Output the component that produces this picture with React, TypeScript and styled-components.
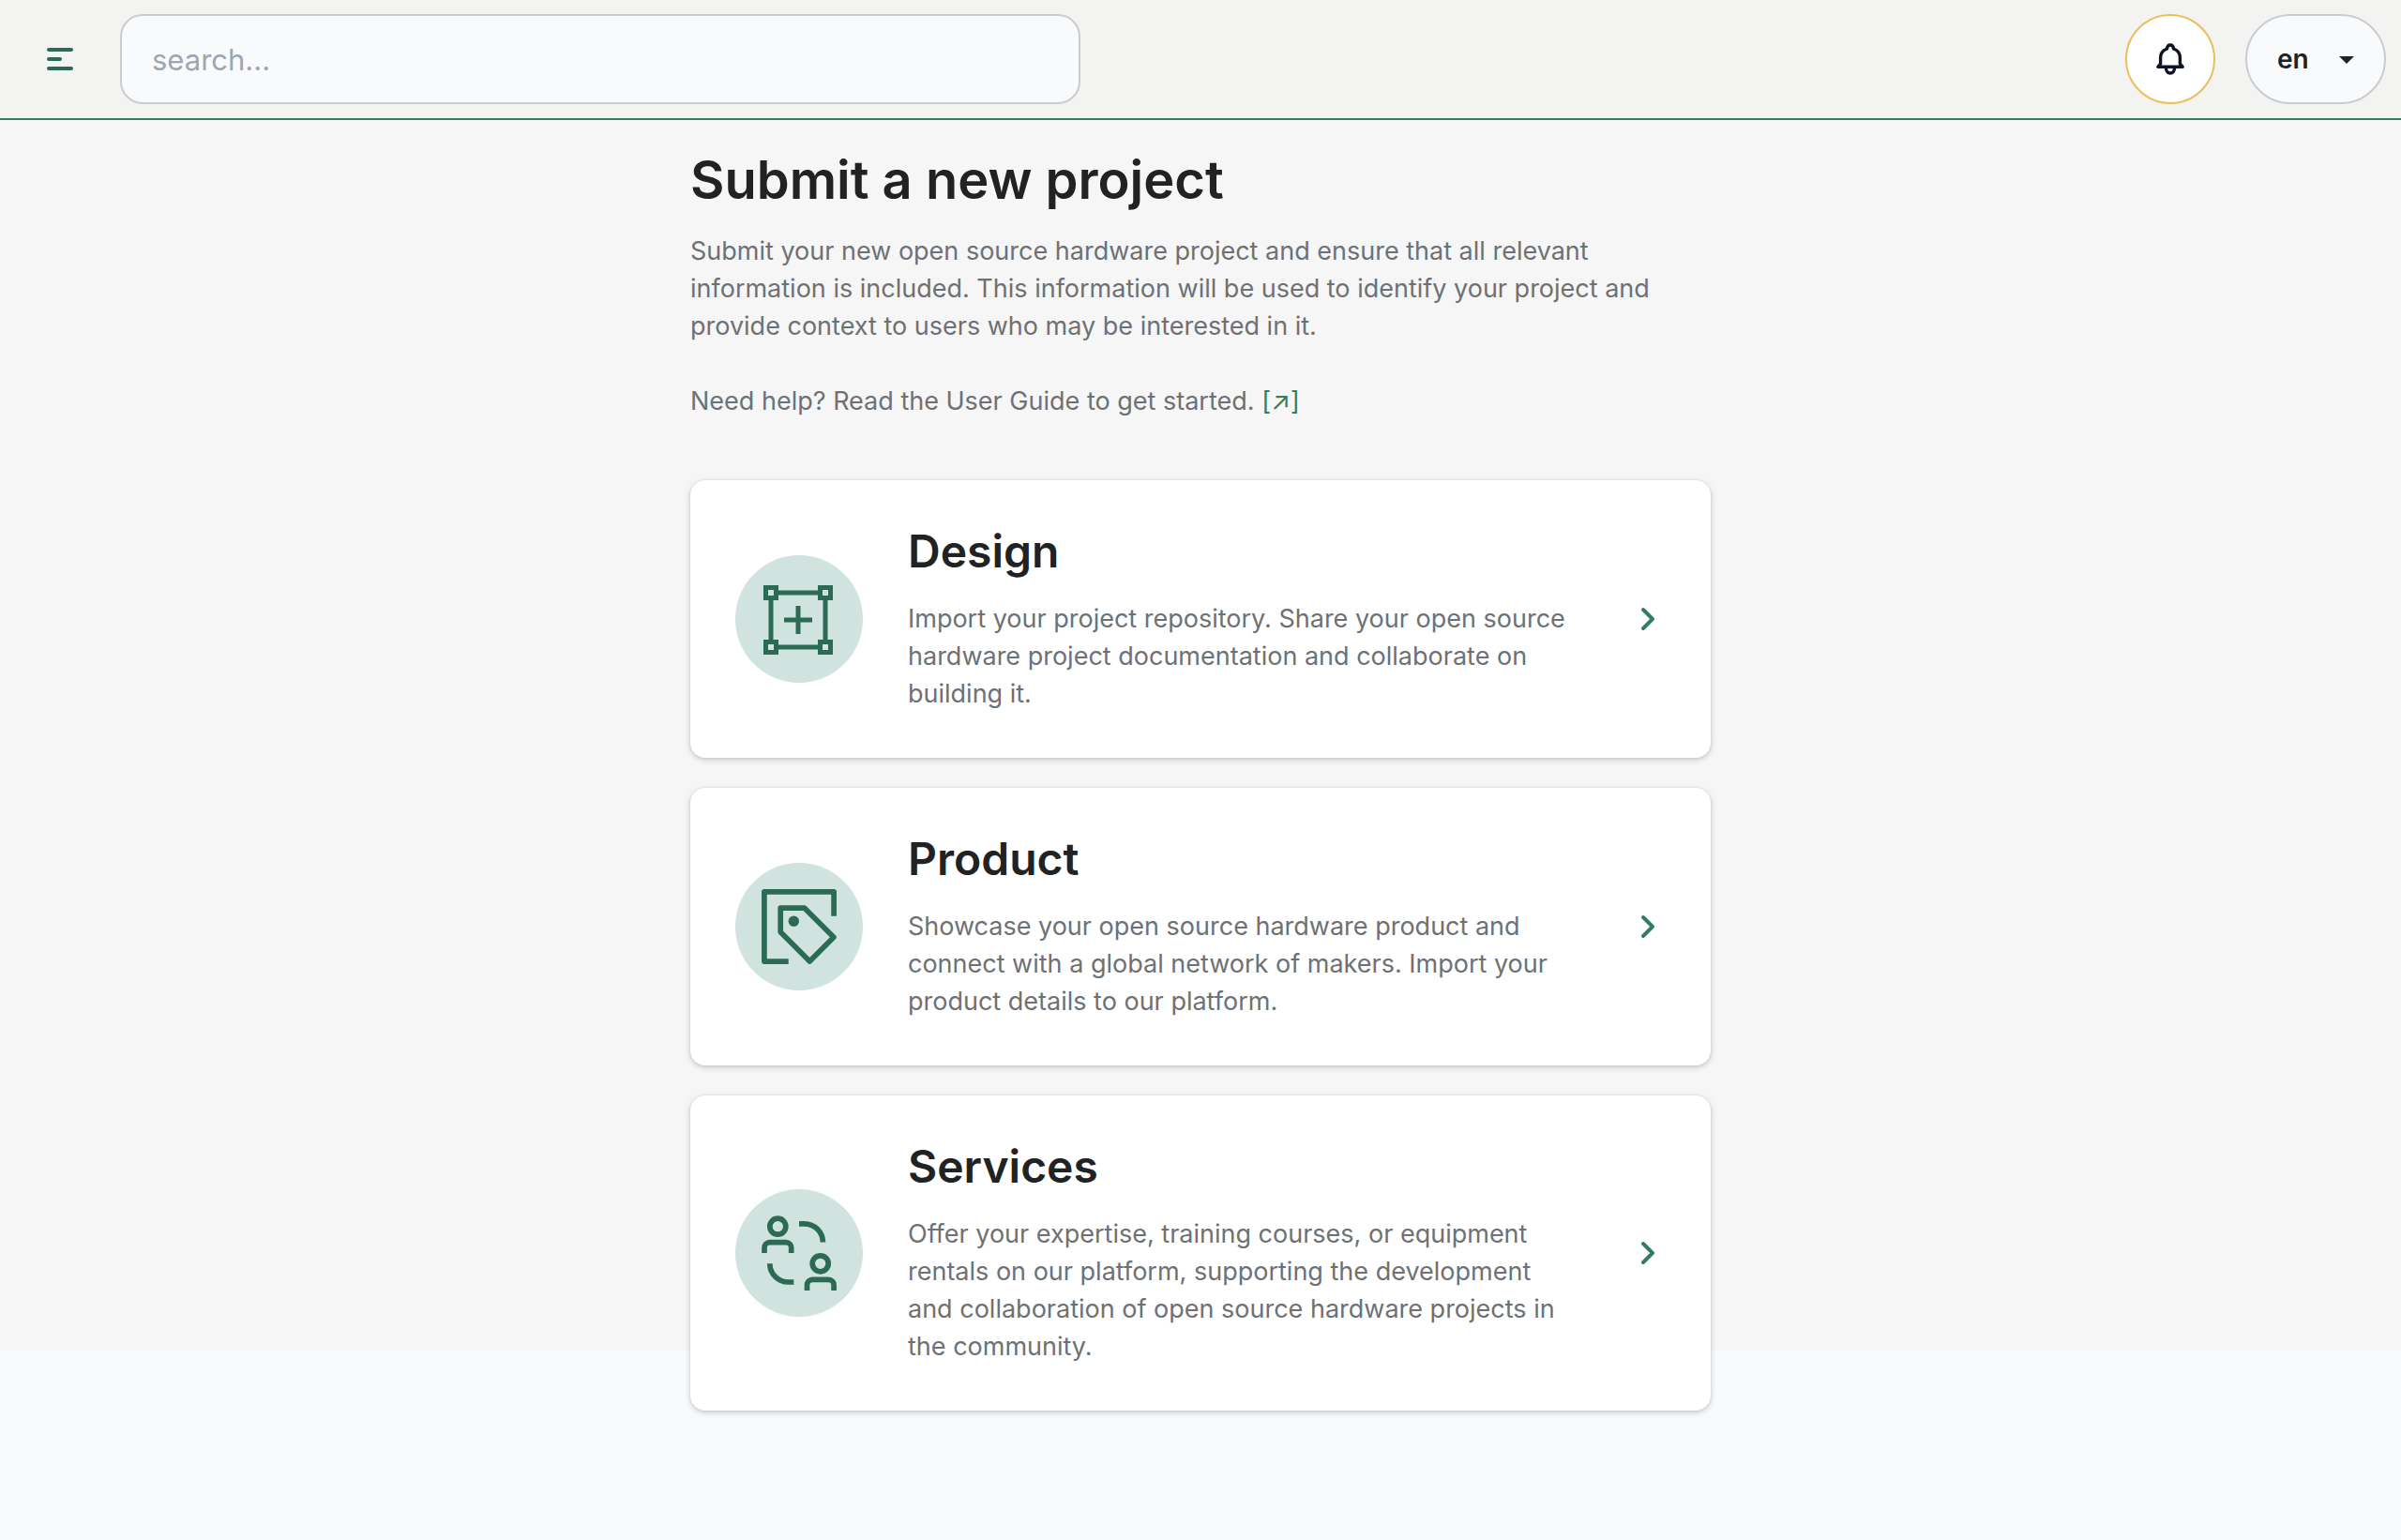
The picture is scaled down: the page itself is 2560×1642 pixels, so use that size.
import React from "react";
import styled, { createGlobalStyle } from "styled-components";

const color = {
  page: "#f9fafc",
  section: "#f6f6f6",
  header: "#f3f3f1",
  green: "#2b6a54",
  greenMid: "#337e61",
  greenSoft: "#d0e3de",
  border: "#c9ccd3",
  gold: "#ebbe5b",
  ink: "#202223",
  muted: "#6d7175",
};

const GlobalStyle = createGlobalStyle`
  *, *::before, *::after { box-sizing: border-box; }
  body {
    margin: 0;
    background: ${color.page};
    color: ${color.ink};
    font-family: Inter, "Liberation Sans", sans-serif;
    font-size: 27px;
    line-height: 40px;
  }
  h1, h2, p { margin: 0; }
  a { color: inherit; text-decoration: none; }
  button, input, select { font: inherit; color: inherit; }
  svg { display: block; }
`;

const Page = styled.div`
  min-height: 100vh;
  background: linear-gradient(${color.section}, ${color.section}) top / 100% 1440px no-repeat;
`;

const Header = styled.header`
  display: flex;
  align-items: center;
  gap: 16px;
  height: 128px;
  padding: 0 16px;
  background: ${color.header};
  border-bottom: 2px solid ${color.greenMid};
`;

const MenuButton = styled.button`
  display: grid;
  place-items: center;
  flex: none;
  width: 96px;
  height: 96px;
  padding: 0;
  border: 0;
  background: transparent;
  color: ${color.green};
`;

const SearchInput = styled.input`
  flex: 0 1 1024px;
  min-width: 0;
  height: 96px;
  padding: 0 32px;
  border: 2px solid ${color.border};
  border-radius: 24px;
  background: ${color.page};
  font-size: 31px;
  &::placeholder {
    color: #9fa5b1;
    opacity: 1;
  }
`;

const HeaderActions = styled.div`
  display: flex;
  gap: 32px;
  margin-left: auto;
`;

const BellButton = styled.button`
  display: grid;
  place-items: center;
  width: 96px;
  height: 96px;
  padding: 0;
  border: 2px solid ${color.gold};
  border-radius: 50%;
  background: #fff;
  color: #0d1424;
`;

const LanguageField = styled.label`
  display: grid;
  align-items: center;
  width: 150px;
  > * { grid-area: 1 / 1; }
  > svg {
    justify-self: end;
    margin: 2px 34px 0 0;
    pointer-events: none;
  }
`;

const LanguageSelect = styled.select`
  appearance: none;
  width: 100%;
  height: 96px;
  padding: 0 32px;
  border: 2px solid ${color.border};
  border-radius: 48px;
  background: ${color.page};
  font-size: 28px;
  font-weight: 600;
`;

const Main = styled.main`
  max-width: 1152px;
  margin: 0 auto;
  padding: 32px 32px 138px;
`;

const PageTitle = styled.h1`
  font-size: 56px;
  line-height: 64px;
  font-weight: 600;
`;

const Intro = styled.div`
  display: grid;
  gap: 40px;
  margin: 24px 0 64px;
  color: ${color.muted};
`;

const GuideLink = styled.a`
  color: ${color.greenMid};
`;

const CardList = styled.div`
  display: grid;
  gap: 32px;
`;

const Card = styled.a`
  display: flex;
  align-items: center;
  gap: 48px;
  padding: 48px;
  border-radius: 16px;
  background: #fff;
  box-shadow: 0 0 2px rgba(0, 0, 0, 0.1), 0 2px 6px rgba(0, 0, 0, 0.2);
`;

const CardIcon = styled.span`
  flex: none;
  width: 136px;
  height: 136px;
  border-radius: 50%;
  background: ${color.greenSoft};
  color: ${color.green};
`;

const CardBody = styled.div`
  flex: 1;
  display: grid;
  gap: 24px;
`;

const CardTitle = styled.h2`
  font-size: 48px;
  line-height: 56px;
  font-weight: 600;
`;

const CardText = styled.p`
  color: ${color.muted};
`;

const Chevron = styled.svg`
  flex: none;
  width: 48px;
  height: 48px;
  color: ${color.greenMid};
`;

const DesignIcon = () => (
  <svg width="136" height="136" fill="none" stroke="currentColor" strokeWidth="5" aria-hidden="true">
    <path d="M46 40H88M46 98H88M38 48V90M96 48V90M52 69H82M67 54V84" />
    <path d="M32.5 34.5h11v11h-11zM90.5 34.5h11v11h-11zM32.5 92.5h11v11h-11zM90.5 92.5h11v11h-11z" />
  </svg>
);

const ProductIcon = () => (
  <svg width="136" height="136" fill="none" stroke="currentColor" strokeWidth="5.7" strokeLinejoin="round" aria-hidden="true">
    <path d="M105.1 56.7V30.9H30.9V105.1H56.7" />
    <path d="M48.2 48.2H73.8L104.9 79.3L79.3 104.9L48.2 73.8Z" />
    <circle cx="62.3" cy="62.3" r="5.7" fill="currentColor" stroke="none" />
  </svg>
);

const ServicesIcon = () => (
  <svg width="136" height="136" fill="none" stroke="currentColor" strokeWidth="5.7" aria-hidden="true">
    <circle cx="45.3" cy="39.7" r="8.5" />
    <path d="M31 68V62.4a5.7 5.7 0 0 1 5.7-5.7H54a5.7 5.7 0 0 1 5.7 5.7V68" />
    <circle cx="90.7" cy="79.3" r="8.5" />
    <path d="M76.5 108V102a5.7 5.7 0 0 1 5.7-5.7H99.4a5.7 5.7 0 0 1 5.7 5.7V108" />
    <path d="M68 36.8H73.6a19.8 19.8 0 0 1 19.8 19.8" />
    <path d="M36.8 79.2a19.8 19.8 0 0 0 19.8 19.8H62.3" />
  </svg>
);

const projectTypes = [
  {
    title: "Design",
    text: "Import your project repository. Share your open source hardware project documentation and collaborate on building it.",
    icon: <DesignIcon />,
  },
  {
    title: "Product",
    text: "Showcase your open source hardware product and connect with a global network of makers. Import your product details to our platform.",
    icon: <ProductIcon />,
  },
  {
    title: "Services",
    text: "Offer your expertise, training courses, or equipment rentals on our platform, supporting the development and collaboration of open source hardware projects in the community.",
    icon: <ServicesIcon />,
  },
];

export default function App() {
  return (
    <Page>
      <GlobalStyle />
      <Header>
        <MenuButton type="button" aria-label="Open menu">
          <svg width="32" height="32" fill="none" stroke="currentColor" strokeWidth="4" strokeLinecap="round" aria-hidden="true">
            <path d="M4 6H28M4 16H16M4 26H28" />
          </svg>
        </MenuButton>
        <SearchInput type="search" placeholder="search..." aria-label="Search" />
        <HeaderActions>
          <BellButton type="button" aria-label="Notifications">
            <svg width="40" height="40" fill="none" stroke="currentColor" strokeWidth="3.4" strokeLinejoin="round" aria-hidden="true">
              <path d="M6.8 28.300H33.200L30.400 25V18.500C30.400 14 27.500 10.500 23.500 9C23.300 6.500 22 5 20 5S16.700 6.500 16.500 9C12.500 10.500 9.600 14 9.600 18.500V25Z" />
              <path d="M15.500 29.500C15.500 33 17.500 35 20 35S24.500 33 24.500 29.500" />
            </svg>
          </BellButton>
          <LanguageField>
            <LanguageSelect aria-label="Language" defaultValue="en">
              <option value="en">en</option>
            </LanguageSelect>
            <svg width="16" height="8" aria-hidden="true">
              <path d="M0 0H16L8 8Z" fill={color.ink} />
            </svg>
          </LanguageField>
        </HeaderActions>
      </Header>
      <Main>
        <PageTitle>Submit a new project</PageTitle>
        <Intro>
          <p>
            Submit your new open source hardware project and ensure that all relevant information is
            included. This information will be used to identify your project and provide context to
            users who may be interested in it.
          </p>
          <p>
            Need help? Read the User Guide to get started. <GuideLink href="#guide">[↗]</GuideLink>
          </p>
        </Intro>
        <CardList>
          {projectTypes.map((type) => (
            <Card key={type.title} href={`#${type.title.toLowerCase()}`}>
              <CardIcon>{type.icon}</CardIcon>
              <CardBody>
                <CardTitle>{type.title}</CardTitle>
                <CardText>{type.text}</CardText>
              </CardBody>
              <Chevron viewBox="0 0 48 48" fill="none" stroke="currentColor" strokeWidth="4" strokeLinecap="round" strokeLinejoin="round" aria-hidden="true">
                <path d="M24 14L34 24L24 34" />
              </Chevron>
            </Card>
          ))}
        </CardList>
      </Main>
    </Page>
  );
}
